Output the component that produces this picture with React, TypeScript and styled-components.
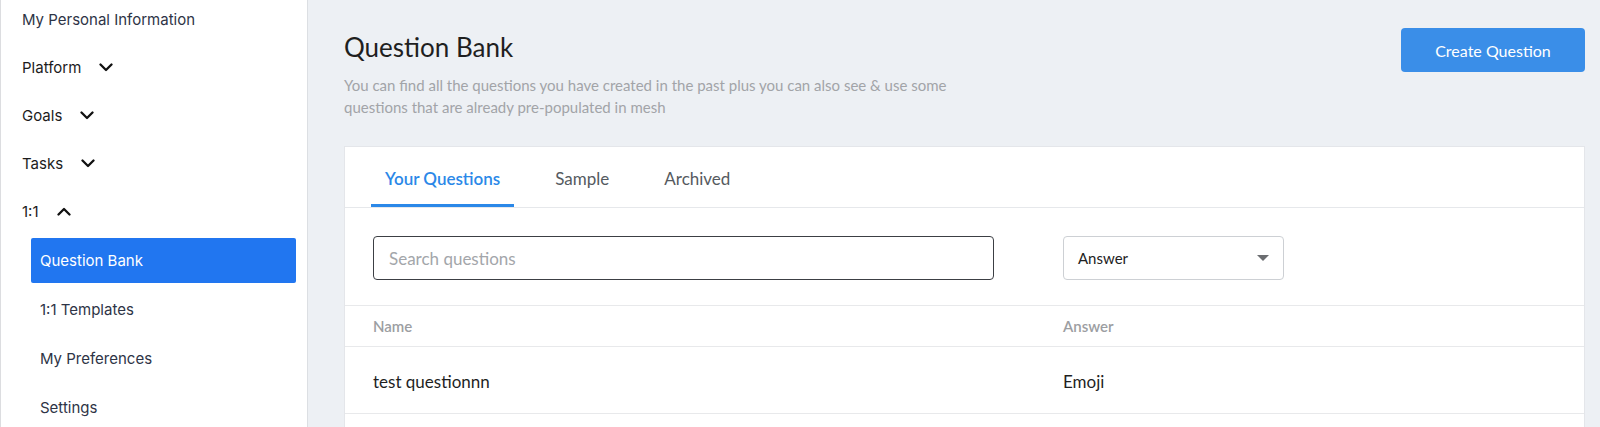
import React from "react";
import styled, { createGlobalStyle } from "styled-components";

const GlobalStyle = createGlobalStyle`
  html, body { margin: 0; padding: 0; background: #edf0f4; }
  * { box-sizing: border-box; }
`;

const Page = styled.div`
  display: flex;
  min-height: 100vh;
  background: #edf0f4;
`;

const Sidebar = styled.aside`
  width: 308px;
  flex-shrink: 0;
  background: #ffffff;
  border-left: 1px solid #dcdde0;
  border-right: 1px solid #dcdfe3;
  overflow: hidden;
  font-family: Inter, "Liberation Sans", sans-serif;
`;

const NavList = styled.nav`
  display: flex;
  flex-direction: column;
  margin-top: -5px;
`;

const NavItem = styled.div<{ $muted?: boolean }>`
  height: 48px;
  display: flex;
  align-items: center;
  gap: 18px;
  padding-left: 21px;
  font-size: 15px;
  color: ${(p) => (p.$muted ? "#2e3446" : "#1c1c1c")};
`;

const SubList = styled.div`
  display: flex;
  flex-direction: column;
  gap: 4px;
  margin: 3px 11px 0 30px;
`;

const SubItem = styled.div<{ $active?: boolean }>`
  height: 45px;
  display: flex;
  align-items: center;
  padding-left: 9px;
  font-size: 15px;
  border-radius: 2px;
  color: ${(p) => (p.$active ? "#ffffff" : "#2e3446")};
  background: ${(p) => (p.$active ? "#2176f0" : "transparent")};
`;

const Main = styled.main`
  flex: 1;
  display: flex;
  flex-direction: column;
  padding: 28px 15px 0 36px;
  font-family: Lato, "Open Sans", sans-serif;
`;

const Header = styled.header`
  display: flex;
  justify-content: space-between;
  align-items: flex-start;
`;

const TitleBlock = styled.div`
  display: flex;
  flex-direction: column;
`;

const Title = styled.h1`
  margin: 0;
  font-size: 26px;
  line-height: 38px;
  font-weight: 400;
  color: #1f1f1f;
`;

const Subtitle = styled.p`
  margin: 8px 0 0;
  max-width: 612px;
  font-size: 15px;
  line-height: 22px;
  color: #a2a4a8;
`;

const PrimaryButton = styled.button`
  width: 184px;
  height: 44px;
  border: none;
  border-radius: 4px;
  background: #3a8ee8;
  color: #ffffff;
  font-family: Lato, "Open Sans", sans-serif;
  font-size: 16px;
  cursor: pointer;
`;

const Card = styled.section`
  flex: 1;
  margin-top: 28px;
  background: #ffffff;
  border: 1px solid #e4e6ea;
  border-bottom: none;
`;

const TabBar = styled.div`
  display: flex;
  gap: 27px;
  padding-left: 26px;
  border-bottom: 1px solid #e6e8eb;
`;

const Tab = styled.div<{ $active?: boolean }>`
  height: 60px;
  display: flex;
  align-items: center;
  padding: 2px 14px 0;
  font-size: 17px;
  font-weight: ${(p) => (p.$active ? 600 : 400)};
  color: ${(p) => (p.$active ? "#2b88e8" : "#555a60")};
  box-shadow: ${(p) => (p.$active ? "inset 0 -3px 0 #2b88e8" : "none")};
`;

const Columns = styled.div`
  display: grid;
  grid-template-columns: 690px 1fr;
  padding-left: 28px;
`;

const FilterRow = styled(Columns)`
  padding-top: 28px;
  padding-bottom: 25px;
  align-items: center;
`;

const SearchInput = styled.input`
  width: 621px;
  height: 44px;
  border: 1px solid #3c3f44;
  border-radius: 4px;
  padding: 0 15px;
  font-family: Lato, "Open Sans", sans-serif;
  font-size: 17px;
  color: #222;
  outline: none;
  &::placeholder { color: #a3a6aa; }
`;

const Select = styled.div`
  width: 221px;
  height: 44px;
  border: 1px solid #cdd0d4;
  border-radius: 4px;
  display: flex;
  align-items: center;
  justify-content: space-between;
  padding: 0 14px 0 14px;
  font-size: 15px;
  color: #222;
`;

const TableHead = styled(Columns)`
  height: 42px;
  align-items: center;
  border-top: 1px solid #e8e9eb;
  border-bottom: 1px solid #e8e9eb;
  font-size: 15px;
  font-weight: 600;
  color: #9c9ea2;
`;

const TableRow = styled(Columns)`
  height: 67px;
  align-items: center;
  padding-top: 3px;
  border-bottom: 1px solid #e8e9eb;
  font-size: 17px;
  color: #1f1f1f;
`;

const Chevron = ({ up }: { up?: boolean }) => (
  <svg width="14" height="9" viewBox="0 0 14 9" fill="none">
    <polyline
      points={up ? "1.5,7.5 7,2 12.5,7.5" : "1.5,1.5 7,7 12.5,1.5"}
      stroke="#111"
      strokeWidth="2.3"
      strokeLinecap="round"
      strokeLinejoin="round"
    />
  </svg>
);

const Caret = () => (
  <svg width="12" height="6" viewBox="0 0 12 6">
    <polygon points="0,0 12,0 6,6" fill="#6b6d70" />
  </svg>
);

export default function App() {
  return (
    <>
      <GlobalStyle />
      <Page>
        <Sidebar>
          <NavList>
            <NavItem $muted>My Personal Information</NavItem>
            <NavItem>
              Platform <Chevron />
            </NavItem>
            <NavItem>
              Goals <Chevron />
            </NavItem>
            <NavItem>
              Tasks <Chevron />
            </NavItem>
            <NavItem>
              1:1 <Chevron up />
            </NavItem>
            <SubList>
              <SubItem $active>Question Bank</SubItem>
              <SubItem>1:1 Templates</SubItem>
              <SubItem>My Preferences</SubItem>
              <SubItem>Settings</SubItem>
            </SubList>
          </NavList>
        </Sidebar>
        <Main>
          <Header>
            <TitleBlock>
              <Title>Question Bank</Title>
              <Subtitle>
                You can find all the questions you have created in the past plus you can also see &amp; use some
                questions that are already pre-populated in mesh
              </Subtitle>
            </TitleBlock>
            <PrimaryButton>Create Question</PrimaryButton>
          </Header>
          <Card>
            <TabBar>
              <Tab $active>Your Questions</Tab>
              <Tab>Sample</Tab>
              <Tab>Archived</Tab>
            </TabBar>
            <FilterRow>
              <SearchInput placeholder="Search questions" />
              <Select>
                <span>Answer</span>
                <Caret />
              </Select>
            </FilterRow>
            <TableHead>
              <span>Name</span>
              <span>Answer</span>
            </TableHead>
            <TableRow>
              <span>test questionnn</span>
              <span>Emoji</span>
            </TableRow>
          </Card>
        </Main>
      </Page>
    </>
  );
}
